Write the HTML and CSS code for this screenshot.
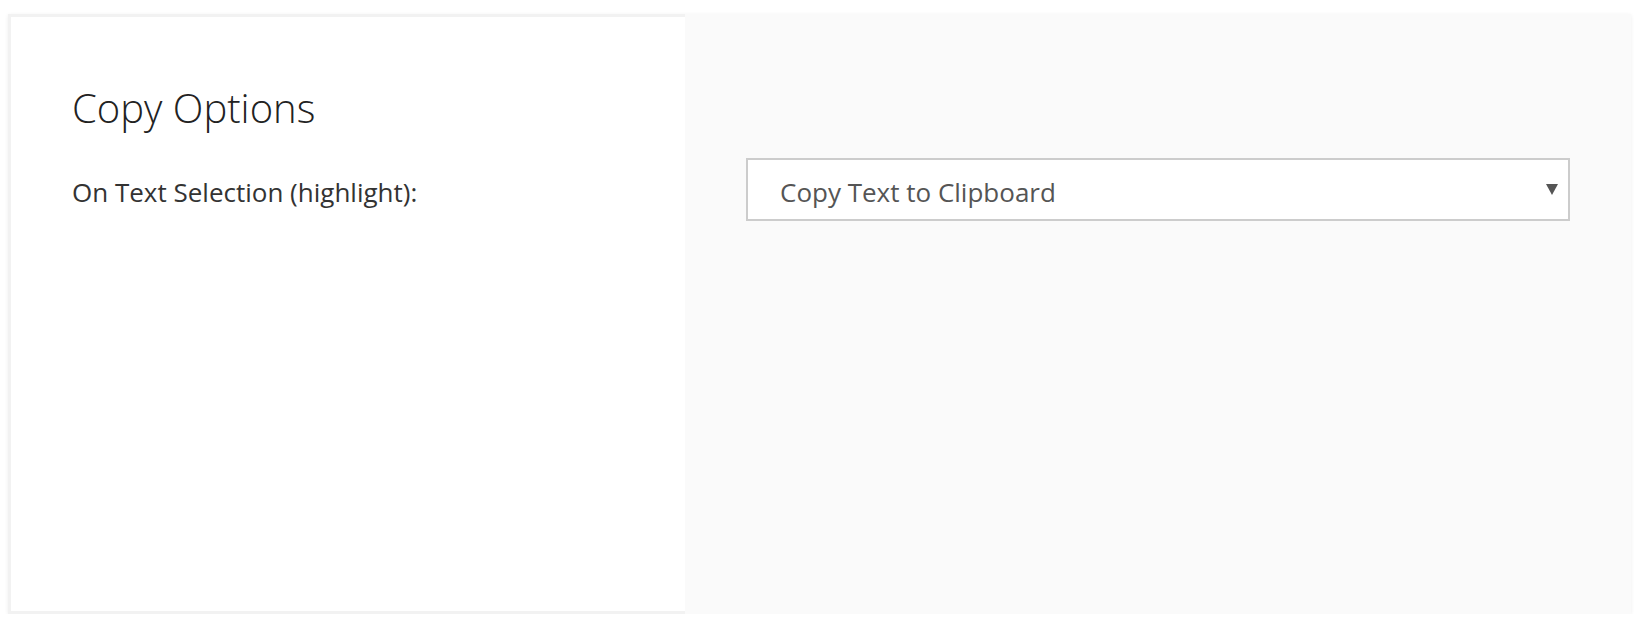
FILE: index.html
```html
<!DOCTYPE html>
<html lang="en">
<head>
<meta charset="utf-8">
<title>Copy Options</title>
<link rel="stylesheet" href="styles.css">
</head>
<body>
<div class="card">
  <section class="left">
    <h1 class="title">Copy Options</h1>
    <div class="label">On Text Selection (highlight):</div>
  </section>
  <section class="right">
    <div class="select" role="combobox" aria-label="On Text Selection">
      <span class="select-text">Copy Text to Clipboard</span>
      <svg class="arrow" width="12" height="11" viewBox="0 0 12 11"><polygon points="0,0 12,0 6,11" fill="#555"/></svg>
    </div>
  </section>
</div>
</body>
</html>
```
FILE: styles.css
```css
html, body {
  margin: 0;
  padding: 0;
  background: #fff;
}
body {
  padding: 14px 0 0 8px;
  font-family: "Open Sans", "Liberation Sans", sans-serif;
}
.card {
  display: flex;
  width: 1623px;
  height: 600px;
  box-shadow: 0 1px 4px rgba(0, 0, 0, 0.07);
}
.left {
  width: 677px;
  box-sizing: border-box;
  background: #fff;
  border: 3px solid #f2f2f2;
  border-right: 0;
  padding: 67px 0 0 61px;
}
.title {
  margin: 0;
  font-size: 40px;
  line-height: 48px;
  font-weight: 300;
  color: #222;
}
.label {
  margin-top: 45px;
  font-size: 26px;
  line-height: 30px;
  color: #333;
}
.right {
  flex: 1;
  background: #fafafa;
  padding: 144px 61px 0 61px;
}
.select {
  display: flex;
  align-items: center;
  justify-content: space-between;
  height: 59px;
  box-sizing: content-box;
  border: 2px solid #ccc;
  background: #fff;
  padding: 0 10px 0 32px;
}
.select-text {
  font-size: 26px;
  line-height: 30px;
  color: #555;
  padding-top: 5px;
}
.arrow {
  display: block;
}
```
